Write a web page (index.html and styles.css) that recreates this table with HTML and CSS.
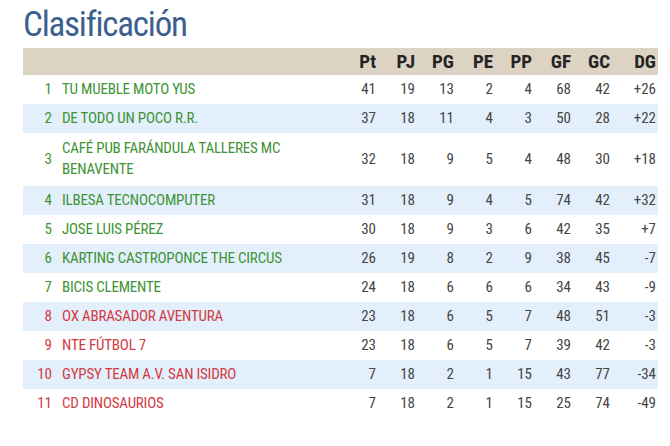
FILE: index.html
```html
<!DOCTYPE html>
<html lang="es">
<head>
<meta charset="utf-8">
<title>Clasificación</title>
<link rel="stylesheet" href="styles.css">
</head>
<body>
<div class="page">
  <h1 class="title">Clasificación</h1>
  <table class="standings">
    <colgroup>
      <col class="c-pos"><col class="c-name">
      <col class="c-stat"><col class="c-stat"><col class="c-stat"><col class="c-stat">
      <col class="c-stat"><col class="c-stat"><col class="c-stat"><col class="c-dg">
    </colgroup>
    <thead>
      <tr>
        <th></th><th></th>
        <th>Pt</th><th>PJ</th><th>PG</th><th>PE</th><th>PP</th><th>GF</th><th>GC</th><th>DG</th>
      </tr>
    </thead>
    <tbody>
      <tr class="up"><td class="pos">1</td><td class="name">TU MUEBLE MOTO YUS</td><td>41</td><td>19</td><td>13</td><td>2</td><td>4</td><td>68</td><td>42</td><td>+26</td></tr>
      <tr class="up alt"><td class="pos">2</td><td class="name">DE TODO UN POCO R.R.</td><td>37</td><td>18</td><td>11</td><td>4</td><td>3</td><td>50</td><td>28</td><td>+22</td></tr>
      <tr class="up tall"><td class="pos">3</td><td class="name">CAFÉ PUB FARÁNDULA TALLERES MC<br>BENAVENTE</td><td>32</td><td>18</td><td>9</td><td>5</td><td>4</td><td>48</td><td>30</td><td>+18</td></tr>
      <tr class="up alt"><td class="pos">4</td><td class="name">ILBESA TECNOCOMPUTER</td><td>31</td><td>18</td><td>9</td><td>4</td><td>5</td><td>74</td><td>42</td><td>+32</td></tr>
      <tr class="up"><td class="pos">5</td><td class="name">JOSE LUIS PÉREZ</td><td>30</td><td>18</td><td>9</td><td>3</td><td>6</td><td>42</td><td>35</td><td>+7</td></tr>
      <tr class="up alt"><td class="pos">6</td><td class="name">KARTING CASTROPONCE THE CIRCUS</td><td>26</td><td>19</td><td>8</td><td>2</td><td>9</td><td>38</td><td>45</td><td>-7</td></tr>
      <tr class="up"><td class="pos">7</td><td class="name">BICIS CLEMENTE</td><td>24</td><td>18</td><td>6</td><td>6</td><td>6</td><td>34</td><td>43</td><td>-9</td></tr>
      <tr class="down alt"><td class="pos">8</td><td class="name">OX ABRASADOR AVENTURA</td><td>23</td><td>18</td><td>6</td><td>5</td><td>7</td><td>48</td><td>51</td><td>-3</td></tr>
      <tr class="down"><td class="pos">9</td><td class="name">NTE FÚTBOL 7</td><td>23</td><td>18</td><td>6</td><td>5</td><td>7</td><td>39</td><td>42</td><td>-3</td></tr>
      <tr class="down alt"><td class="pos">10</td><td class="name">GYPSY TEAM A.V. SAN ISIDRO</td><td>7</td><td>18</td><td>2</td><td>1</td><td>15</td><td>43</td><td>77</td><td>-34</td></tr>
      <tr class="down"><td class="pos">11</td><td class="name">CD DINOSAURIOS</td><td>7</td><td>18</td><td>2</td><td>1</td><td>15</td><td>25</td><td>74</td><td>-49</td></tr>
    </tbody>
  </table>
</div>
</body>
</html>
```

FILE: styles.css
```css
html, body {
  margin: 0;
  padding: 0;
  background: #ffffff;
}

body {
  font-family: "Roboto Condensed", "DejaVu Sans Condensed", "DejaVu Sans", sans-serif;
  font-stretch: condensed;
}

.page {
  padding: 5px 0 0 23px;
  width: 635px;
}

.title {
  margin: 0 0 3px 0;
  font-size: 35px;
  line-height: 40px;
  font-weight: normal;
  color: #3c5f90;
  letter-spacing: -1.2px;
}

.standings {
  width: 635px;
  border-collapse: collapse;
  table-layout: fixed;
  font-size: 15px;
  color: #454545;
}

.c-pos { width: 29px; }
.c-name { width: 287px; }
.c-stat { width: 39px; }
.c-dg { width: 46px; }

.standings thead tr {
  background: #dcd3c3;
}

.standings th {
  height: 27px;
  padding: 0 2px 0 0;
  font-size: 19px;
  font-weight: bold;
  color: #242424;
  text-align: right;
  line-height: 27px;
}

.standings td {
  padding: 4px 2px 4px 0;
  line-height: 21px;
  text-align: right;
  vertical-align: middle;
}

.standings td.name {
  text-align: left;
  padding-left: 10px;
  padding-right: 0;
  letter-spacing: -0.2px;
}

.standings tr.tall td {
  padding-top: 5px;
  padding-bottom: 6px;
}

.standings tr.alt {
  background: #e3f0fb;
}

.standings td.pos {
  padding-right: 0;
}

.standings tr.up td.pos,
.standings tr.up td.name {
  color: #3e9334;
}

.standings tr.down td.pos,
.standings tr.down td.name {
  color: #d23a44;
}
```
